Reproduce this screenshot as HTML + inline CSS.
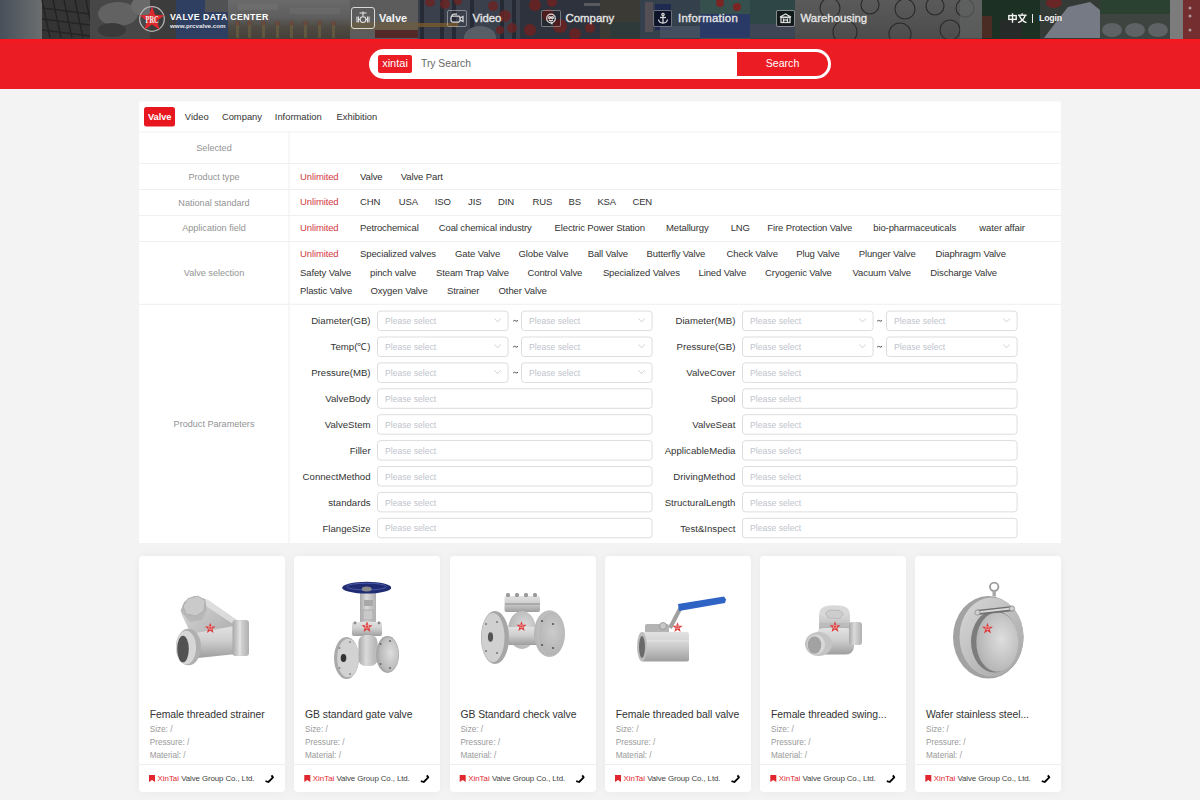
<!DOCTYPE html>
<html><head><meta charset="utf-8">
<style>
*{margin:0;padding:0;box-sizing:border-box}
html,body{width:1200px;height:800px;overflow:hidden;background:#f3f3f3;font-family:"Liberation Sans",sans-serif;position:relative}
.a{position:absolute;white-space:nowrap}
#hdr{position:absolute;left:0;top:0;width:1200px;height:38.5px;overflow:hidden;background:#4a4a4a}
#hdr .bg{position:absolute;top:0;height:38px}
#red{position:absolute;left:0;top:38.5px;width:1200px;height:50px;background:linear-gradient(180deg,#f7161f 0,#f7161f 2px,#ec1c24 3.5px)}
#pill{position:absolute;left:369px;top:49px;width:462px;height:30px;border-radius:15px;background:#fff}
#tag{position:absolute;left:378px;top:55px;width:34px;height:18px;background:#ec1c24;border-radius:2px;color:#fff;font-size:11px;line-height:17px;text-align:center}
#btn{position:absolute;left:737px;top:52px;width:91px;height:24px;background:#ec1c24;border-radius:0 12px 12px 0;color:#fff;font-size:10.6px;line-height:22px;text-align:center}
.card{position:absolute;top:556px;width:146px;height:236px;background:#fff;border-radius:4px;box-shadow:0 0 10px rgba(0,0,0,.045)}
</style></head>
<body>
<div id="hdr">
<svg class="a" style="left:0;top:0" width="1200" height="39"><defs><linearGradient id="hA" x1="0" y1="0" x2="1" y2="0"><stop offset="0" stop-color="#48505a"/><stop offset=".6" stop-color="#5c6266"/><stop offset="1" stop-color="#6c6e6e"/></linearGradient><linearGradient id="hF" x1="0" y1="0" x2="0" y2="1"><stop offset="0" stop-color="#6a6a6a"/><stop offset=".45" stop-color="#5e5e5e"/><stop offset=".7" stop-color="#4e4a42"/><stop offset="1" stop-color="#45413a"/></linearGradient><linearGradient id="hM" x1="0" y1="0" x2="0" y2="1"><stop offset="0" stop-color="#5a5a5a"/><stop offset="1" stop-color="#4c4c4c"/></linearGradient></defs><rect x="0" y="0" width="42" height="39" fill="url(#hA)"/><rect x="42" y="0" width="48" height="39" fill="#343434"/><line x1="42" y1="0" x2="50" y2="38" stroke="#222" stroke-width="1.3"/><line x1="53" y1="0" x2="61" y2="38" stroke="#222" stroke-width="1.3"/><line x1="64" y1="0" x2="72" y2="38" stroke="#222" stroke-width="1.3"/><line x1="75" y1="0" x2="83" y2="38" stroke="#222" stroke-width="1.3"/><line x1="86" y1="0" x2="94" y2="38" stroke="#222" stroke-width="1.3"/><line x1="42" y1="8" x2="90" y2="14" stroke="#242424" stroke-width="1.3"/><line x1="42" y1="19" x2="90" y2="25" stroke="#242424" stroke-width="1.3"/><line x1="42" y1="30" x2="90" y2="36" stroke="#242424" stroke-width="1.3"/><rect x="90" y="0" width="60" height="39" fill="#474747"/><ellipse cx="118" cy="14" rx="20" ry="12" fill="#626262"/><ellipse cx="143" cy="6" rx="12" ry="10" fill="#6a6a6a"/><ellipse cx="112" cy="30" rx="14" ry="7" fill="#3a3a3a"/><rect x="150" y="0" width="26" height="39" fill="#3c3c3c"/><rect x="176" y="0" width="52" height="39" fill="#2e3f62"/><rect x="205" y="0" width="23" height="12" fill="#505254"/><rect x="228" y="0" width="122" height="39" fill="url(#hF)"/><rect x="236" y="21" width="3" height="17" fill="#7e6c40" opacity=".45"/><circle cx="237.5" cy="23" r="2.5" fill="#6a3030" opacity=".4"/><rect x="248" y="21" width="3" height="17" fill="#7e6c40" opacity=".45"/><circle cx="249.5" cy="23" r="2.5" fill="#6a3030" opacity=".4"/><rect x="262" y="21" width="3" height="17" fill="#7e6c40" opacity=".45"/><circle cx="263.5" cy="23" r="2.5" fill="#6a3030" opacity=".4"/><rect x="276" y="21" width="3" height="17" fill="#7e6c40" opacity=".45"/><circle cx="277.5" cy="23" r="2.5" fill="#6a3030" opacity=".4"/><rect x="290" y="21" width="3" height="17" fill="#7e6c40" opacity=".45"/><circle cx="291.5" cy="23" r="2.5" fill="#6a3030" opacity=".4"/><rect x="304" y="21" width="3" height="17" fill="#7e6c40" opacity=".45"/><circle cx="305.5" cy="23" r="2.5" fill="#6a3030" opacity=".4"/><rect x="318" y="21" width="3" height="17" fill="#7e6c40" opacity=".45"/><circle cx="319.5" cy="23" r="2.5" fill="#6a3030" opacity=".4"/><rect x="332" y="21" width="3" height="17" fill="#7e6c40" opacity=".45"/><circle cx="333.5" cy="23" r="2.5" fill="#6a3030" opacity=".4"/><rect x="238" y="4" width="40" height="6" fill="#747474" opacity=".5"/><rect x="290" y="8" width="50" height="6" fill="#747474" opacity=".4"/><rect x="350" y="0" width="68" height="39" fill="#5c5c5c"/><rect x="350" y="22" width="68" height="8" fill="#6a5c44" opacity=".8"/><rect x="375" y="30" width="43" height="8" fill="#522828"/><rect x="418" y="0" width="102" height="39" fill="#3a404c"/><rect x="420" y="0" width="4" height="39" fill="#262a34"/><rect x="440" y="0" width="4" height="39" fill="#262a34"/><rect x="452" y="0" width="4" height="39" fill="#262a34"/><rect x="470" y="0" width="4" height="39" fill="#262a34"/><rect x="500" y="0" width="4" height="39" fill="#262a34"/><rect x="512" y="0" width="4" height="39" fill="#262a34"/><rect x="418" y="23" width="40" height="4" fill="#7a5a2a" opacity=".8"/><ellipse cx="480" cy="38" rx="16" ry="12" fill="#585e66"/><circle cx="430" cy="2" r="5" fill="#6a2424" opacity=".85"/><circle cx="445" cy="4" r="5" fill="#6a2424" opacity=".85"/><circle cx="458" cy="1" r="4" fill="#6a2424" opacity=".85"/><circle cx="493" cy="6" r="5" fill="#6a2424" opacity=".85"/><circle cx="505" cy="16" r="6" fill="#6a2424" opacity=".85"/><circle cx="512" cy="28" r="5" fill="#6a2424" opacity=".85"/><circle cx="500" cy="30" r="4" fill="#6a2424" opacity=".85"/><rect x="520" y="0" width="80" height="39" fill="#2e323c"/><circle cx="535" cy="5" r="6" fill="#6c2222" opacity=".85"/><circle cx="548" cy="15" r="6" fill="#6c2222" opacity=".85"/><circle cx="530" cy="30" r="6" fill="#6c2222" opacity=".85"/><circle cx="560" cy="26" r="7" fill="#6c2222" opacity=".85"/><circle cx="575" cy="34" r="6" fill="#6c2222" opacity=".85"/><circle cx="590" cy="28" r="5" fill="#6c2222" opacity=".85"/><circle cx="552" cy="2" r="5" fill="#6c2222" opacity=".85"/><rect x="584" y="3" width="24" height="3" fill="#6a6a6a" opacity=".7"/><rect x="600" y="0" width="40" height="39" fill="#3c3a34"/><rect x="610" y="22" width="30" height="16" fill="#2e3a3a"/><rect x="640" y="0" width="60" height="39" fill="#34404c"/><rect x="655" y="4" width="16" height="26" fill="#1e2a50"/><rect x="645" y="2" width="8" height="30" fill="#6a5a5a" opacity=".6"/><rect x="700" y="0" width="50" height="14" fill="#36504e"/><rect x="700" y="14" width="50" height="24" fill="#2a3a66"/><circle cx="720" cy="3" r="4" fill="#7a2424"/><circle cx="737" cy="7" r="4" fill="#7a2424"/><rect x="660" y="26" width="40" height="12" fill="#4a5466" opacity=".7"/><rect x="750" y="0" width="45" height="39" fill="#2f4646"/><rect x="750" y="24" width="45" height="14" fill="#3e4656"/><rect x="795" y="0" width="187" height="39" fill="url(#hM)"/><circle cx="830" cy="8" r="10" fill="none" stroke="#2a2a2a" stroke-width="1.1"/><circle cx="870" cy="5" r="9" fill="none" stroke="#2a2a2a" stroke-width="1.1"/><circle cx="905" cy="9" r="10" fill="none" stroke="#2a2a2a" stroke-width="1.1"/><circle cx="935" cy="6" r="9" fill="none" stroke="#2a2a2a" stroke-width="1.1"/><circle cx="965" cy="8" r="9" fill="none" stroke="#2a2a2a" stroke-width="1.1"/><circle cx="845" cy="32" r="12" fill="none" stroke="#2a2a2a" stroke-width="1.1"/><circle cx="900" cy="34" r="11" fill="none" stroke="#2a2a2a" stroke-width="1.1"/><circle cx="950" cy="30" r="10" fill="none" stroke="#2a2a2a" stroke-width="1.1"/><rect x="960" y="0" width="22" height="38" fill="#626464" opacity=".6"/><rect x="982" y="0" width="58" height="39" fill="#1c3024"/><rect x="982" y="16" width="10" height="22" fill="#4a2c24"/><rect x="1000" y="20" width="22" height="18" fill="#262a28"/><rect x="1040" y="0" width="60" height="39" fill="#343a36"/><polygon points="1044,38 1056,22 1068,7 1090,2 1100,10 1100,38" fill="#767a84"/><ellipse cx="1054" cy="3" rx="8" ry="5" fill="#6a2626"/><rect x="1100" y="0" width="70" height="39" fill="#3e4440"/><rect x="1100" y="0" width="70" height="14" fill="#25402c" opacity=".8"/><ellipse cx="1112" cy="30" rx="10" ry="7" fill="#5e6264"/><ellipse cx="1135" cy="30" rx="10" ry="7" fill="#5e6264"/><ellipse cx="1158" cy="30" rx="10" ry="7" fill="#5e6264"/><rect x="1170" y="0" width="13" height="39" fill="#7c7c7c"/><rect x="1183" y="0" width="17" height="39" fill="#742e30"/><circle cx="1190" cy="8" r="1.5" fill="#c8c8c8" opacity=".7"/><circle cx="1190" cy="16" r="1.5" fill="#c8c8c8" opacity=".7"/><circle cx="1190" cy="30" r="1.5" fill="#c8c8c8" opacity=".7"/></svg>
</div>
<svg class="a" style="left:138px;top:5px" width="28" height="28" viewBox="0 0 28 28">
<circle cx="14" cy="14" r="12.3" fill="none" stroke="#b8b8b8" stroke-width="1.2"/>
<polygon points="14.00,1.30 17.12,10.01 26.36,10.28 19.04,15.94 21.64,24.82 14.00,19.60 6.36,24.82 8.96,15.94 1.64,10.28 10.88,10.01" fill="#dc2a2e"/>
<text x="0" y="0" transform="translate(14 18.2) scale(0.62 1)" text-anchor="middle" font-family="Liberation Serif" font-weight="700" font-size="10.5" fill="#f4f4f4" letter-spacing="-0.3">PRC</text>
</svg>
<div class="a" style="left:170px;top:12px;font-size:8.8px;font-weight:700;color:#fff;letter-spacing:.41px;line-height:10px">VALVE DATA CENTER</div>
<div class="a" style="left:170px;top:22px;font-size:6.2px;font-weight:700;color:#e8e8e8;line-height:8px;letter-spacing:0">www.prcvalve.com</div>

<div class="a" style="left:351px;top:7px;width:24px;height:22px;border:1.5px solid #d8d8d8;border-radius:3px"></div>
<svg class="a" style="left:351px;top:7px" width="24" height="22" viewBox="0 0 24 22">
<g stroke="#e0e0e0" stroke-width="1.1" fill="none">
<line x1="8.5" y1="6" x2="15.5" y2="6"/><line x1="12" y1="4.5" x2="12" y2="9.5"/>
<circle cx="12" cy="12.6" r="2.9"/>
<line x1="6" y1="9.5" x2="6" y2="15.5"/><line x1="7.5" y1="9.5" x2="7.5" y2="15.5"/>
<line x1="16.5" y1="9.5" x2="16.5" y2="15.5"/><line x1="18" y1="9.5" x2="18" y2="15.5"/>
<line x1="7.5" y1="12.5" x2="9" y2="12.5"/><line x1="15" y1="12.5" x2="16.5" y2="12.5"/>
</g></svg>
<div class="a" style="left:379px;top:11px;font-size:11px;font-weight:700;color:#f4f4f4;line-height:13px;top:11.5px">Valve</div>

<div class="a" style="left:447px;top:9.5px;width:20px;height:17px;border:1.2px solid rgba(200,200,205,.55);border-radius:2px"></div>
<svg class="a" style="left:447px;top:9.5px" width="20" height="17" viewBox="0 0 20 17">
<g stroke="#dadada" stroke-width="1.25" fill="none"><rect x="4" y="6" width="9" height="6" rx="1.5"/><path d="M13 8 L16 6.5 L16 11.5 L13 10"/><path d="M5 6 Q5 4 7 4 L10 4"/></g></svg>
<div class="a" style="left:472.5px;top:11.8px;font-size:11.4px;color:#e4e4e4;line-height:13px;-webkit-text-stroke:.35px #e4e4e4">Video</div>

<div class="a" style="left:541px;top:9.5px;width:20px;height:17px;border:1.2px solid rgba(200,200,205,.5);background:rgba(0,0,0,.2);border-radius:2px"></div>
<svg class="a" style="left:541px;top:9.5px" width="20" height="17" viewBox="0 0 20 17">
<g stroke="#dadada" stroke-width="1.25" fill="none"><circle cx="10" cy="8.5" r="4.3"/><circle cx="8.6" cy="7.5" r="1"/><circle cx="11.4" cy="7.5" r="1"/><path d="M8 10 Q10 11.5 12 10"/><line x1="10" y1="12.8" x2="11.5" y2="14.2"/></g></svg>
<div class="a" style="left:565.5px;top:11.8px;font-size:11.4px;color:#e4e4e4;line-height:13px;-webkit-text-stroke:.35px #e4e4e4">Company</div>

<div class="a" style="left:652.5px;top:9.5px;width:19.5px;height:17px;border:1.2px solid rgba(200,200,205,.5);background:rgba(0,0,10,.55);border-radius:2px"></div>
<svg class="a" style="left:652.5px;top:9.5px" width="20" height="17" viewBox="0 0 20 17">
<g stroke="#dadada" stroke-width="1.25" fill="none"><circle cx="10" cy="4.5" r="1.2"/><line x1="10" y1="5.7" x2="10" y2="13"/><line x1="7" y1="7.5" x2="13" y2="7.5"/><path d="M5.5 9.5 Q6 13 10 13 Q14 13 14.5 9.5"/></g></svg>
<div class="a" style="left:678px;top:11.8px;font-size:11.4px;color:#e4e4e4;line-height:13px;letter-spacing:.28px;-webkit-text-stroke:.35px #e4e4e4">Information</div>

<div class="a" style="left:776px;top:10px;width:19px;height:16.5px;border:1.2px solid rgba(215,215,215,.6);border-radius:2px;background:rgba(0,0,0,.62)"></div>
<svg class="a" style="left:776px;top:10px" width="19" height="17" viewBox="0 0 19 17">
<g stroke="#dadada" stroke-width="1.25" fill="none"><path d="M4 7 L9.5 4 L15 7 Z"/><rect x="5" y="7.5" width="9" height="5"/><line x1="7.5" y1="8.5" x2="7.5" y2="12"/><line x1="11.5" y1="8.5" x2="11.5" y2="12"/><line x1="7.5" y1="10" x2="11.5" y2="10"/></g></svg>
<div class="a" style="left:800.5px;top:11.8px;font-size:11.4px;color:#e4e4e4;line-height:13px;-webkit-text-stroke:.35px #e4e4e4">Warehousing</div>

<svg class="a" style="left:1008px;top:13px" width="20" height="10" viewBox="0 0 20 10">
<g stroke="#f4f4f4" stroke-width="1.4" fill="none">
<rect x="0.8" y="2.6" width="7.4" height="3.8"/><line x1="4.5" y1="0.3" x2="4.5" y2="9.8"/>
<line x1="14.2" y1="0.2" x2="14.2" y2="1.8"/><line x1="10" y1="2.2" x2="18.6" y2="2.2"/>
<path d="M11.4 2.4 Q13.5 8 18.5 9.6"/><path d="M17.2 2.4 Q15 8 10 9.6"/>
</g></svg>
<div class="a" style="left:1031.8px;top:14px;width:1.2px;height:8.5px;background:#e8e8e8"></div>
<div class="a" style="left:1039px;top:13.3px;font-size:8.7px;font-weight:700;letter-spacing:-.12px;color:#f4f4f4;line-height:11px">Login</div>
<div id="red"></div>
<div id="pill"></div>
<div id="tag">xintai</div>
<div class="a" style="left:421px;top:56.5px;font-size:10.3px;color:#666;line-height:13px">Try Search</div>
<div id="btn">Search</div>
<svg class="a" style="left:0;top:0" width="1200" height="800" font-family="Liberation Sans"><rect x="139" y="101.5" width="922" height="441.5" fill="#fff"/><rect x="144" y="107" width="31" height="19.5" fill="#e8161e" rx="2.5"/><rect x="139" y="131.5" width="922" height="1" fill="#efefef"/><rect x="139" y="163" width="922" height="1" fill="#efefef"/><rect x="139" y="189" width="922" height="1" fill="#efefef"/><rect x="139" y="215" width="922" height="1" fill="#efefef"/><rect x="139" y="241" width="922" height="1" fill="#efefef"/><rect x="139" y="303.8" width="922" height="1" fill="#efefef"/><rect x="288.5" y="132" width="1" height="411" fill="#efefef"/><rect x="377.5" y="311.1" width="130.6" height="19.5" fill="#fff" rx="3" stroke="#dddddd" stroke-width="1"/><rect x="521.5" y="311.1" width="130.6" height="19.5" fill="#fff" rx="3" stroke="#dddddd" stroke-width="1"/><rect x="742.5" y="311.1" width="130.6" height="19.5" fill="#fff" rx="3" stroke="#dddddd" stroke-width="1"/><rect x="886.5" y="311.1" width="130.6" height="19.5" fill="#fff" rx="3" stroke="#dddddd" stroke-width="1"/><rect x="377.5" y="337.0" width="130.6" height="19.5" fill="#fff" rx="3" stroke="#dddddd" stroke-width="1"/><rect x="521.5" y="337.0" width="130.6" height="19.5" fill="#fff" rx="3" stroke="#dddddd" stroke-width="1"/><rect x="742.5" y="337.0" width="130.6" height="19.5" fill="#fff" rx="3" stroke="#dddddd" stroke-width="1"/><rect x="886.5" y="337.0" width="130.6" height="19.5" fill="#fff" rx="3" stroke="#dddddd" stroke-width="1"/><rect x="377.5" y="362.90000000000003" width="130.6" height="19.5" fill="#fff" rx="3" stroke="#dddddd" stroke-width="1"/><rect x="521.5" y="362.90000000000003" width="130.6" height="19.5" fill="#fff" rx="3" stroke="#dddddd" stroke-width="1"/><rect x="742.5" y="362.90000000000003" width="274.6" height="19.5" fill="#fff" rx="3" stroke="#dddddd" stroke-width="1"/><rect x="377.5" y="388.8" width="274.6" height="19.5" fill="#fff" rx="3" stroke="#dddddd" stroke-width="1"/><rect x="742.5" y="388.8" width="274.6" height="19.5" fill="#fff" rx="3" stroke="#dddddd" stroke-width="1"/><rect x="377.5" y="414.70000000000005" width="274.6" height="19.5" fill="#fff" rx="3" stroke="#dddddd" stroke-width="1"/><rect x="742.5" y="414.70000000000005" width="274.6" height="19.5" fill="#fff" rx="3" stroke="#dddddd" stroke-width="1"/><rect x="377.5" y="440.6" width="274.6" height="19.5" fill="#fff" rx="3" stroke="#dddddd" stroke-width="1"/><rect x="742.5" y="440.6" width="274.6" height="19.5" fill="#fff" rx="3" stroke="#dddddd" stroke-width="1"/><rect x="377.5" y="466.5" width="274.6" height="19.5" fill="#fff" rx="3" stroke="#dddddd" stroke-width="1"/><rect x="742.5" y="466.5" width="274.6" height="19.5" fill="#fff" rx="3" stroke="#dddddd" stroke-width="1"/><rect x="377.5" y="492.4" width="274.6" height="19.5" fill="#fff" rx="3" stroke="#dddddd" stroke-width="1"/><rect x="742.5" y="492.4" width="274.6" height="19.5" fill="#fff" rx="3" stroke="#dddddd" stroke-width="1"/><rect x="377.5" y="518.3" width="274.6" height="19.5" fill="#fff" rx="3" stroke="#dddddd" stroke-width="1"/><rect x="742.5" y="518.3" width="274.6" height="19.5" fill="#fff" rx="3" stroke="#dddddd" stroke-width="1"/><path d="M494.40000000000003 318.6 L497.6 321.8 L500.8 318.6" fill="none" stroke="#c0c4cc" stroke-width="0.8"/><path d="M513.2 321.20000000000005 q1.2 -1.4 2.4 -0.4 q1.2 1 2.4 -0.4" fill="none" stroke="#333" stroke-width="0.9"/><path d="M638.4 318.6 L641.6 321.8 L644.8000000000001 318.6" fill="none" stroke="#c0c4cc" stroke-width="0.8"/><path d="M859.4 318.6 L862.6 321.8 L865.8000000000001 318.6" fill="none" stroke="#c0c4cc" stroke-width="0.8"/><path d="M877.2 321.20000000000005 q1.2 -1.4 2.4 -0.4 q1.2 1 2.4 -0.4" fill="none" stroke="#333" stroke-width="0.9"/><path d="M1003.4 318.6 L1006.6 321.8 L1009.8000000000001 318.6" fill="none" stroke="#c0c4cc" stroke-width="0.8"/><path d="M494.40000000000003 344.5 L497.6 347.7 L500.8 344.5" fill="none" stroke="#c0c4cc" stroke-width="0.8"/><path d="M513.2 347.1 q1.2 -1.4 2.4 -0.4 q1.2 1 2.4 -0.4" fill="none" stroke="#333" stroke-width="0.9"/><path d="M638.4 344.5 L641.6 347.7 L644.8000000000001 344.5" fill="none" stroke="#c0c4cc" stroke-width="0.8"/><path d="M859.4 344.5 L862.6 347.7 L865.8000000000001 344.5" fill="none" stroke="#c0c4cc" stroke-width="0.8"/><path d="M877.2 347.1 q1.2 -1.4 2.4 -0.4 q1.2 1 2.4 -0.4" fill="none" stroke="#333" stroke-width="0.9"/><path d="M1003.4 344.5 L1006.6 347.7 L1009.8000000000001 344.5" fill="none" stroke="#c0c4cc" stroke-width="0.8"/><path d="M494.40000000000003 370.40000000000003 L497.6 373.6 L500.8 370.40000000000003" fill="none" stroke="#c0c4cc" stroke-width="0.8"/><path d="M513.2 373.00000000000006 q1.2 -1.4 2.4 -0.4 q1.2 1 2.4 -0.4" fill="none" stroke="#333" stroke-width="0.9"/><path d="M638.4 370.40000000000003 L641.6 373.6 L644.8000000000001 370.40000000000003" fill="none" stroke="#c0c4cc" stroke-width="0.8"/><text x="148" y="119.8" font-size="9.3" fill="#fff" font-weight="700" letter-spacing="-0.1">Valve</text><text x="184.8" y="119.8" font-size="9.4" fill="#333">Video</text><text x="221.9" y="119.8" font-size="9.4" fill="#333">Company</text><text x="274.8" y="119.8" font-size="9.4" fill="#333">Information</text><text x="336.5" y="119.8" font-size="9.4" fill="#333">Exhibition</text><text x="214" y="150.9" font-size="9.1" fill="#939393" text-anchor="middle">Selected</text><text x="214" y="179.7" font-size="9.1" fill="#939393" text-anchor="middle">Product type</text><text x="214" y="205.5" font-size="9.1" fill="#939393" text-anchor="middle">National standard</text><text x="214" y="231.3" font-size="9.1" fill="#939393" text-anchor="middle">Application field</text><text x="214" y="275.7" font-size="9.1" fill="#939393" text-anchor="middle">Valve selection</text><text x="214" y="427" font-size="9.1" fill="#939393" text-anchor="middle">Product Parameters</text><text x="300" y="179.7" font-size="9.5" fill="#d33a44" letter-spacing="-0.12">Unlimited</text><text x="360" y="179.7" font-size="9.5" fill="#333" letter-spacing="-0.12">Valve</text><text x="400.8" y="179.7" font-size="9.5" fill="#333" letter-spacing="-0.12">Valve Part</text><text x="300" y="205.3" font-size="9.5" fill="#d33a44" letter-spacing="-0.12">Unlimited</text><text x="360" y="205.3" font-size="9.5" fill="#333" letter-spacing="-0.12">CHN</text><text x="398.7" y="205.3" font-size="9.5" fill="#333" letter-spacing="-0.12">USA</text><text x="434.7" y="205.3" font-size="9.5" fill="#333" letter-spacing="-0.12">ISO</text><text x="468" y="205.3" font-size="9.5" fill="#333" letter-spacing="-0.12">JIS</text><text x="498" y="205.3" font-size="9.5" fill="#333" letter-spacing="-0.12">DIN</text><text x="532.6" y="205.3" font-size="9.5" fill="#333" letter-spacing="-0.12">RUS</text><text x="568.6" y="205.3" font-size="9.5" fill="#333" letter-spacing="-0.12">BS</text><text x="597.4" y="205.3" font-size="9.5" fill="#333" letter-spacing="-0.12">KSA</text><text x="632.4" y="205.3" font-size="9.5" fill="#333" letter-spacing="-0.12">CEN</text><text x="300" y="231.2" font-size="9.5" fill="#d33a44" letter-spacing="-0.12">Unlimited</text><text x="360" y="231.2" font-size="9.5" fill="#333" letter-spacing="-0.12">Petrochemical</text><text x="438.8" y="231.2" font-size="9.5" fill="#333" letter-spacing="-0.12">Coal chemical industry</text><text x="554.6" y="231.2" font-size="9.5" fill="#333" letter-spacing="-0.12">Electric Power Station</text><text x="666" y="231.2" font-size="9.5" fill="#333" letter-spacing="-0.12">Metallurgy</text><text x="730.7" y="231.2" font-size="9.5" fill="#333" letter-spacing="-0.12">LNG</text><text x="767.3" y="231.2" font-size="9.5" fill="#333" letter-spacing="-0.12">Fire Protection Valve</text><text x="873.3" y="231.2" font-size="9.5" fill="#333" letter-spacing="-0.12">bio-pharmaceuticals</text><text x="979.3" y="231.2" font-size="9.5" fill="#333" letter-spacing="-0.12">water affair</text><text x="300" y="257" font-size="9.5" fill="#d33a44" letter-spacing="-0.12">Unlimited</text><text x="360" y="257" font-size="9.5" fill="#333" letter-spacing="-0.12">Specialized valves</text><text x="455" y="257" font-size="9.5" fill="#333" letter-spacing="-0.12">Gate Valve</text><text x="518.6" y="257" font-size="9.5" fill="#333" letter-spacing="-0.12">Globe Valve</text><text x="587.7" y="257" font-size="9.5" fill="#333" letter-spacing="-0.12">Ball Valve</text><text x="646.5" y="257" font-size="9.5" fill="#333" letter-spacing="-0.12">Butterfly Valve</text><text x="726.5" y="257" font-size="9.5" fill="#333" letter-spacing="-0.12">Check Valve</text><text x="796.2" y="257" font-size="9.5" fill="#333" letter-spacing="-0.12">Plug Valve</text><text x="858.7" y="257" font-size="9.5" fill="#333" letter-spacing="-0.12">Plunger Valve</text><text x="935.5" y="257" font-size="9.5" fill="#333" letter-spacing="-0.12">Diaphragm Valve</text><text x="300" y="275.6" font-size="9.5" fill="#333" letter-spacing="-0.12">Safety Valve</text><text x="370" y="275.6" font-size="9.5" fill="#333" letter-spacing="-0.12">pinch valve</text><text x="436" y="275.6" font-size="9.5" fill="#333" letter-spacing="-0.12">Steam Trap Valve</text><text x="527.5" y="275.6" font-size="9.5" fill="#333" letter-spacing="-0.12">Control Valve</text><text x="602.9" y="275.6" font-size="9.5" fill="#333" letter-spacing="-0.12">Specialized Valves</text><text x="698.5" y="275.6" font-size="9.5" fill="#333" letter-spacing="-0.12">Lined Valve</text><text x="765.1" y="275.6" font-size="9.5" fill="#333" letter-spacing="-0.12">Cryogenic Valve</text><text x="852.6" y="275.6" font-size="9.5" fill="#333" letter-spacing="-0.12">Vacuum Valve</text><text x="930.3" y="275.6" font-size="9.5" fill="#333" letter-spacing="-0.12">Discharge Valve</text><text x="300" y="294.4" font-size="9.5" fill="#333" letter-spacing="-0.12">Plastic Valve</text><text x="370.6" y="294.4" font-size="9.5" fill="#333" letter-spacing="-0.12">Oxygen Valve</text><text x="447" y="294.4" font-size="9.5" fill="#333" letter-spacing="-0.12">Strainer</text><text x="498.6" y="294.4" font-size="9.5" fill="#333" letter-spacing="-0.12">Other Valve</text><text x="370.6" y="324.40000000000003" font-size="9.6" fill="#333" text-anchor="end" letter-spacing="0.02">Diameter(GB)</text><text x="385" y="324.20000000000005" font-size="8.6" fill="#c0c4cc">Please select</text><text x="529" y="324.20000000000005" font-size="8.6" fill="#c0c4cc">Please select</text><text x="735.4" y="324.40000000000003" font-size="9.6" fill="#333" text-anchor="end" letter-spacing="0.02">Diameter(MB)</text><text x="750" y="324.20000000000005" font-size="8.6" fill="#c0c4cc">Please select</text><text x="894" y="324.20000000000005" font-size="8.6" fill="#c0c4cc">Please select</text><text x="370.6" y="350.3" font-size="9.6" fill="#333" text-anchor="end" letter-spacing="0.02">Temp(℃)</text><text x="385" y="350.1" font-size="8.6" fill="#c0c4cc">Please select</text><text x="529" y="350.1" font-size="8.6" fill="#c0c4cc">Please select</text><text x="735.4" y="350.3" font-size="9.6" fill="#333" text-anchor="end" letter-spacing="0.02">Pressure(GB)</text><text x="750" y="350.1" font-size="8.6" fill="#c0c4cc">Please select</text><text x="894" y="350.1" font-size="8.6" fill="#c0c4cc">Please select</text><text x="370.6" y="376.20000000000005" font-size="9.6" fill="#333" text-anchor="end" letter-spacing="0.02">Pressure(MB)</text><text x="385" y="376.00000000000006" font-size="8.6" fill="#c0c4cc">Please select</text><text x="529" y="376.00000000000006" font-size="8.6" fill="#c0c4cc">Please select</text><text x="735.4" y="376.20000000000005" font-size="9.6" fill="#333" text-anchor="end" letter-spacing="0.02">ValveCover</text><text x="750" y="376.00000000000006" font-size="8.6" fill="#c0c4cc">Please select</text><text x="370.6" y="402.1" font-size="9.6" fill="#333" text-anchor="end" letter-spacing="0.02">ValveBody</text><text x="385" y="401.90000000000003" font-size="8.6" fill="#c0c4cc">Please select</text><text x="735.4" y="402.1" font-size="9.6" fill="#333" text-anchor="end" letter-spacing="0.02">Spool</text><text x="750" y="401.90000000000003" font-size="8.6" fill="#c0c4cc">Please select</text><text x="370.6" y="428.00000000000006" font-size="9.6" fill="#333" text-anchor="end" letter-spacing="0.02">ValveStem</text><text x="385" y="427.80000000000007" font-size="8.6" fill="#c0c4cc">Please select</text><text x="735.4" y="428.00000000000006" font-size="9.6" fill="#333" text-anchor="end" letter-spacing="0.02">ValveSeat</text><text x="750" y="427.80000000000007" font-size="8.6" fill="#c0c4cc">Please select</text><text x="370.6" y="453.90000000000003" font-size="9.6" fill="#333" text-anchor="end" letter-spacing="0.02">Filler</text><text x="385" y="453.70000000000005" font-size="8.6" fill="#c0c4cc">Please select</text><text x="735.4" y="453.90000000000003" font-size="9.6" fill="#333" text-anchor="end" letter-spacing="0.02">ApplicableMedia</text><text x="750" y="453.70000000000005" font-size="8.6" fill="#c0c4cc">Please select</text><text x="370.6" y="479.8" font-size="9.6" fill="#333" text-anchor="end" letter-spacing="0.02">ConnectMethod</text><text x="385" y="479.6" font-size="8.6" fill="#c0c4cc">Please select</text><text x="735.4" y="479.8" font-size="9.6" fill="#333" text-anchor="end" letter-spacing="0.02">DrivingMethod</text><text x="750" y="479.6" font-size="8.6" fill="#c0c4cc">Please select</text><text x="370.6" y="505.7" font-size="9.6" fill="#333" text-anchor="end" letter-spacing="0.02">standards</text><text x="385" y="505.5" font-size="8.6" fill="#c0c4cc">Please select</text><text x="735.4" y="505.7" font-size="9.6" fill="#333" text-anchor="end" letter-spacing="0.02">StructuralLength</text><text x="750" y="505.5" font-size="8.6" fill="#c0c4cc">Please select</text><text x="370.6" y="531.5999999999999" font-size="9.6" fill="#333" text-anchor="end" letter-spacing="0.02">FlangeSize</text><text x="385" y="531.4" font-size="8.6" fill="#c0c4cc">Please select</text><text x="735.4" y="531.5999999999999" font-size="9.6" fill="#333" text-anchor="end" letter-spacing="0.02">Test&amp;Inspect</text><text x="750" y="531.4" font-size="8.6" fill="#c0c4cc">Please select</text></svg><div class="card" style="left:139px"></div><div class="card" style="left:294.3px"></div><div class="card" style="left:449.7px"></div><div class="card" style="left:605px"></div><div class="card" style="left:760.3px"></div><div class="card" style="left:915.3px"></div><svg class="a" style="left:0;top:0" width="1200" height="800">
<defs>
<linearGradient id="gv" x1="0" y1="0" x2="0" y2="1"><stop offset="0" stop-color="#e2e2e2"/><stop offset=".45" stop-color="#cfcfcf"/><stop offset="1" stop-color="#9e9e9e"/></linearGradient>
<linearGradient id="gh" x1="0" y1="0" x2="1" y2="0"><stop offset="0" stop-color="#a8a8a8"/><stop offset=".4" stop-color="#dadada"/><stop offset="1" stop-color="#b0b0b0"/></linearGradient>
<linearGradient id="gd" x1="0" y1="0" x2="1" y2="1"><stop offset="0" stop-color="#d8d8d8"/><stop offset="1" stop-color="#a4a4a4"/></linearGradient>
<radialGradient id="gr" cx=".6" cy=".45" r=".6"><stop offset="0" stop-color="#dedede"/><stop offset="1" stop-color="#b4b4b4"/></radialGradient>
<symbol id="star" viewBox="-10 -10 20 20"><polygon points="0,-9.5 2.4,-3 9.2,-3 3.8,1.2 5.8,8.4 0,4.2 -5.8,8.4 -3.8,1.2 -9.2,-3 -2.4,-3" fill="#dd3a3a"/><rect x="-2.6" y="-2.8" width="5.2" height="4.6" rx="1" fill="none" stroke="#f4dada" stroke-width="1.1"/></symbol>
</defs>
<!-- card1 Y strainer -->
<g>
<polygon points="181,613 199,597 208,600 238,621 236,651 205,653 192,636" fill="url(#gd)"/>
<polygon points="199,597 208,600 238,621 233,624 203,604" fill="#e4e4e4" opacity=".8"/>
<polygon points="180.5,611 184,602 194,596 205,599 207,610 202,620 190,622" fill="#b8b8b8"/>
<polygon points="183,606 188,598.5 198,596 205,600.5 204,611 196,616 186,614" fill="#cacaca" stroke="#a6a6a6" stroke-width=".7"/>
<polygon points="196,633 234,626 236,654 198,658" fill="url(#gv)"/>
<rect x="232.5" y="620" width="16.5" height="36" rx="3" fill="url(#gh)"/>
<line x1="240" y1="621" x2="240" y2="655" stroke="#e6e6e6" stroke-width="1.2"/>
<ellipse cx="188.5" cy="647" rx="12.5" ry="18.3" fill="#b0b0b0"/>
<ellipse cx="186" cy="647.5" rx="10" ry="16.8" fill="#d6d6d6"/>
<ellipse cx="183" cy="649" rx="5.8" ry="13.3" fill="#525252"/>
<use href="#star" x="204.5" y="622.5" width="11.5" height="11.5"/>
</g>
<!-- card2 gate valve -->
<g>
<rect x="360" y="592" width="16" height="32" fill="url(#gh)"/>
<rect x="364" y="600" width="9" height="6" fill="#a8a8a8"/>
<rect x="363" y="610" width="10" height="10" fill="#c8c8c8" stroke="#9a9a9a" stroke-width=".6"/>
<ellipse cx="366.7" cy="587.7" rx="24.5" ry="5.9" fill="#1f2c72"/>
<ellipse cx="366.7" cy="586.6" rx="20" ry="3.4" fill="none" stroke="#4a5aa8" stroke-width="1"/>
<ellipse cx="366.7" cy="589" rx="5" ry="2.5" fill="#8a8a8a"/>
<rect x="352" y="622" width="30" height="14" rx="2" fill="url(#gv)"/>
<circle cx="355" cy="623" r="1.4" fill="#8a8a8a"/><circle cx="379" cy="623" r="1.4" fill="#8a8a8a"/>
<rect x="358.5" y="635" width="19" height="31" rx="7" fill="url(#gh)"/>
<rect x="373" y="647" width="11" height="13" fill="#bcbcbc"/>
<ellipse cx="387.5" cy="654.5" rx="11.5" ry="18.5" fill="#a8a8a8"/>
<ellipse cx="388.5" cy="654.5" rx="10" ry="17" fill="url(#gr)"/>
<ellipse cx="346.5" cy="658" rx="12.5" ry="21" fill="#aaaaaa"/>
<ellipse cx="348" cy="658" rx="10.8" ry="19.3" fill="#d2d2d2"/>
<ellipse cx="343.5" cy="658" rx="2.8" ry="4" fill="#333"/>
<circle cx="339.5" cy="648" r="1" fill="#888"/><circle cx="339.5" cy="668" r="1" fill="#888"/><circle cx="350" cy="642" r="1" fill="#888"/><circle cx="350" cy="674" r="1" fill="#888"/>
<circle cx="380.5" cy="644" r="1" fill="#666"/><circle cx="390" cy="641" r="1" fill="#666"/><circle cx="380.5" cy="664" r="1" fill="#666"/><circle cx="390" cy="668" r="1" fill="#666"/>
<use href="#star" x="361" y="621" width="12" height="12"/>
</g>
<!-- card3 check valve -->
<g>
<rect x="504.5" y="596" width="35.5" height="16" rx="2" fill="url(#gv)"/>
<rect x="506" y="593" width="4" height="4" rx="1.5" fill="#999"/><rect x="515" y="593" width="4" height="4" rx="1.5" fill="#999"/><rect x="524" y="593" width="4" height="4" rx="1.5" fill="#999"/><rect x="533" y="593" width="4" height="4" rx="1.5" fill="#999"/>
<line x1="505" y1="604" x2="540" y2="604" stroke="#8a8a8a" stroke-width="1"/>
<ellipse cx="522" cy="630" rx="14" ry="19" fill="url(#gr)"/>
<rect x="506" y="627" width="30" height="18" fill="url(#gv)"/>
<ellipse cx="549.5" cy="633.6" rx="15.5" ry="23.4" fill="url(#gr)"/>
<ellipse cx="552" cy="633.6" rx="13" ry="21.5" fill="#a8a8a8" opacity=".35"/>
<ellipse cx="495" cy="637.5" rx="14" ry="26.5" fill="#a6a6a6"/>
<ellipse cx="493" cy="637.5" rx="11.5" ry="24.5" fill="#d0d0d0"/>
<ellipse cx="490.5" cy="637" rx="2.6" ry="4.8" fill="#555"/>
<circle cx="486" cy="624" r="1" fill="#777"/><circle cx="486" cy="651" r="1" fill="#777"/><circle cx="497" cy="622" r="1" fill="#777"/><circle cx="497" cy="653" r="1" fill="#777"/>
<circle cx="542" cy="621" r="1.1" fill="#555"/><circle cx="542" cy="645" r="1.1" fill="#555"/><circle cx="553" cy="624" r="1.1" fill="#555"/><circle cx="553" cy="648" r="1.1" fill="#555"/>
<use href="#star" x="516" y="621" width="11" height="11"/>
</g>
<!-- card4 ball valve -->
<g>
<line x1="670" y1="628" x2="681" y2="607" stroke="#a0a0a0" stroke-width="4"/>
<polygon points="678,604 724,596.5 726,599.5 725,603 679,611" fill="#2f63c4"/>
<rect x="645" y="624" width="24" height="10" rx="2" fill="#b4b4b4"/>
<circle cx="663" cy="626" r="3.5" fill="#c8c8c8" stroke="#888" stroke-width=".7"/>
<rect x="641" y="632" width="48" height="29.5" rx="2" fill="url(#gv)"/>
<line x1="641" y1="641" x2="689" y2="641" stroke="#e8e8e8" stroke-width="1"/>
<ellipse cx="642" cy="646.7" rx="5" ry="14.7" fill="#bdbdbd"/>
<ellipse cx="642" cy="647" rx="3" ry="11" fill="#6a6a6a"/>
<use href="#star" x="672" y="622" width="11" height="11"/>
</g>
<!-- card5 swing check -->
<g>
<rect x="819" y="605.5" width="31" height="31" rx="9" fill="url(#gv)"/>
<ellipse cx="834.5" cy="612" rx="14.5" ry="6.5" fill="#d8d8d8"/>
<polygon points="825.5,613 829,610 840,610.5 843.5,614 840,618.5 828,618" fill="#cdcdcd" stroke="#a8a8a8" stroke-width=".6"/>
<line x1="820" y1="624" x2="849" y2="624" stroke="#b4b4b4" stroke-width="1"/>
<line x1="820" y1="627" x2="849" y2="627" stroke="#b4b4b4" stroke-width="1"/>
<rect x="816" y="628" width="38" height="26.5" rx="8" fill="url(#gv)"/>
<rect x="849" y="622" width="13" height="23" rx="3" fill="url(#gh)"/>
<ellipse cx="818.5" cy="644" rx="13.5" ry="12" fill="#c4c4c4"/>
<ellipse cx="816" cy="644.5" rx="9" ry="10" fill="#d8d8d8"/>
<ellipse cx="814.5" cy="645" rx="6.8" ry="8.8" fill="#a2a2a2"/>
<use href="#star" x="829" y="621" width="12" height="12"/>
</g>
<!-- card6 wafer check -->
<g>
<circle cx="994.2" cy="586.8" r="4.2" fill="none" stroke="#9c9c9c" stroke-width="1.9"/>
<rect x="992.5" y="590.5" width="3.4" height="6" fill="#a8a8a8"/>
<ellipse cx="988.3" cy="637.3" rx="35.3" ry="41.3" fill="#a2a2a2"/>
<ellipse cx="991.5" cy="637" rx="32" ry="39.6" fill="url(#gd)"/>
<ellipse cx="994.5" cy="641.5" rx="23.5" ry="31" fill="#7c7c7c"/>
<ellipse cx="997.3" cy="642" rx="21" ry="29.8" fill="url(#gr)"/>
<polygon points="976,610 1013,606 1014,611 977,615" fill="#6e6e6e"/>
<polygon points="980,611 1011,607.5 1011,609.5 980,613" fill="#d8d8d8"/>
<circle cx="977.5" cy="612.5" r="2.6" fill="#cfcfcf" stroke="#8a8a8a" stroke-width=".8"/>
<circle cx="1012" cy="608.5" r="2.6" fill="#cfcfcf" stroke="#8a8a8a" stroke-width=".8"/>
<use href="#star" x="981.5" y="622.5" width="12" height="12"/>
</g>
</svg>
<svg class="a" style="left:0;top:0" width="1200" height="800" font-family="Liberation Sans"><rect x="139" y="764" width="146" height="1" fill="#eeeeee"/><path d="M149.0 775 h6 v7 l-3 -2 l-3 2 z" fill="#e0262e"/><path d="M265.5 781.2 L268.4 782 L273 777.4 L271.5 775.4" fill="none" stroke="#000" stroke-width="1.8" stroke-linejoin="round"/><rect x="294.3" y="764" width="146" height="1" fill="#eeeeee"/><path d="M304.3 775 h6 v7 l-3 -2 l-3 2 z" fill="#e0262e"/><path d="M420.8 781.2 L423.7 782 L428.3 777.4 L426.8 775.4" fill="none" stroke="#000" stroke-width="1.8" stroke-linejoin="round"/><rect x="449.7" y="764" width="146" height="1" fill="#eeeeee"/><path d="M459.7 775 h6 v7 l-3 -2 l-3 2 z" fill="#e0262e"/><path d="M576.2 781.2 L579.1 782 L583.7 777.4 L582.2 775.4" fill="none" stroke="#000" stroke-width="1.8" stroke-linejoin="round"/><rect x="605" y="764" width="146" height="1" fill="#eeeeee"/><path d="M615.0 775 h6 v7 l-3 -2 l-3 2 z" fill="#e0262e"/><path d="M731.5 781.2 L734.4 782 L739 777.4 L737.5 775.4" fill="none" stroke="#000" stroke-width="1.8" stroke-linejoin="round"/><rect x="760.3" y="764" width="146" height="1" fill="#eeeeee"/><path d="M770.3 775 h6 v7 l-3 -2 l-3 2 z" fill="#e0262e"/><path d="M886.8 781.2 L889.6999999999999 782 L894.3 777.4 L892.8 775.4" fill="none" stroke="#000" stroke-width="1.8" stroke-linejoin="round"/><rect x="915.3" y="764" width="146" height="1" fill="#eeeeee"/><path d="M925.3 775 h6 v7 l-3 -2 l-3 2 z" fill="#e0262e"/><path d="M1041.8 781.2 L1044.7 782 L1049.3 777.4 L1047.8 775.4" fill="none" stroke="#000" stroke-width="1.8" stroke-linejoin="round"/><text x="149.7" y="717.9" font-size="10.4" fill="#333" letter-spacing="-0.05">Female threaded strainer</text><text x="149.7" y="731.9" font-size="8.2" fill="#999">Size: /</text><text x="149.7" y="745" font-size="8.2" fill="#999">Pressure: /</text><text x="149.7" y="757.8" font-size="8.2" fill="#999">Material: /</text><text x="157.5" y="780.6" font-size="7.9" fill="#e0262e">XinTai</text><text x="181.2" y="780.6" font-size="7.9" fill="#444" letter-spacing="-0.1">Valve Group Co., Ltd.</text><text x="305.0" y="717.9" font-size="10.4" fill="#333" letter-spacing="-0.05">GB standard gate valve</text><text x="305.0" y="731.9" font-size="8.2" fill="#999">Size: /</text><text x="305.0" y="745" font-size="8.2" fill="#999">Pressure: /</text><text x="305.0" y="757.8" font-size="8.2" fill="#999">Material: /</text><text x="312.8" y="780.6" font-size="7.9" fill="#e0262e">XinTai</text><text x="336.5" y="780.6" font-size="7.9" fill="#444" letter-spacing="-0.1">Valve Group Co., Ltd.</text><text x="460.4" y="717.9" font-size="10.4" fill="#333" letter-spacing="-0.05">GB Standard check valve</text><text x="460.4" y="731.9" font-size="8.2" fill="#999">Size: /</text><text x="460.4" y="745" font-size="8.2" fill="#999">Pressure: /</text><text x="460.4" y="757.8" font-size="8.2" fill="#999">Material: /</text><text x="468.2" y="780.6" font-size="7.9" fill="#e0262e">XinTai</text><text x="491.9" y="780.6" font-size="7.9" fill="#444" letter-spacing="-0.1">Valve Group Co., Ltd.</text><text x="615.7" y="717.9" font-size="10.4" fill="#333" letter-spacing="-0.05">Female threaded ball valve</text><text x="615.7" y="731.9" font-size="8.2" fill="#999">Size: /</text><text x="615.7" y="745" font-size="8.2" fill="#999">Pressure: /</text><text x="615.7" y="757.8" font-size="8.2" fill="#999">Material: /</text><text x="623.5" y="780.6" font-size="7.9" fill="#e0262e">XinTai</text><text x="647.2" y="780.6" font-size="7.9" fill="#444" letter-spacing="-0.1">Valve Group Co., Ltd.</text><text x="771.0" y="717.9" font-size="10.4" fill="#333" letter-spacing="-0.05">Female threaded swing...</text><text x="771.0" y="731.9" font-size="8.2" fill="#999">Size: /</text><text x="771.0" y="745" font-size="8.2" fill="#999">Pressure: /</text><text x="771.0" y="757.8" font-size="8.2" fill="#999">Material: /</text><text x="778.8" y="780.6" font-size="7.9" fill="#e0262e">XinTai</text><text x="802.5" y="780.6" font-size="7.9" fill="#444" letter-spacing="-0.1">Valve Group Co., Ltd.</text><text x="926.0" y="717.9" font-size="10.4" fill="#333" letter-spacing="-0.05">Wafer stainless steel...</text><text x="926.0" y="731.9" font-size="8.2" fill="#999">Size: /</text><text x="926.0" y="745" font-size="8.2" fill="#999">Pressure: /</text><text x="926.0" y="757.8" font-size="8.2" fill="#999">Material: /</text><text x="933.8" y="780.6" font-size="7.9" fill="#e0262e">XinTai</text><text x="957.5" y="780.6" font-size="7.9" fill="#444" letter-spacing="-0.1">Valve Group Co., Ltd.</text></svg>
</body></html>
